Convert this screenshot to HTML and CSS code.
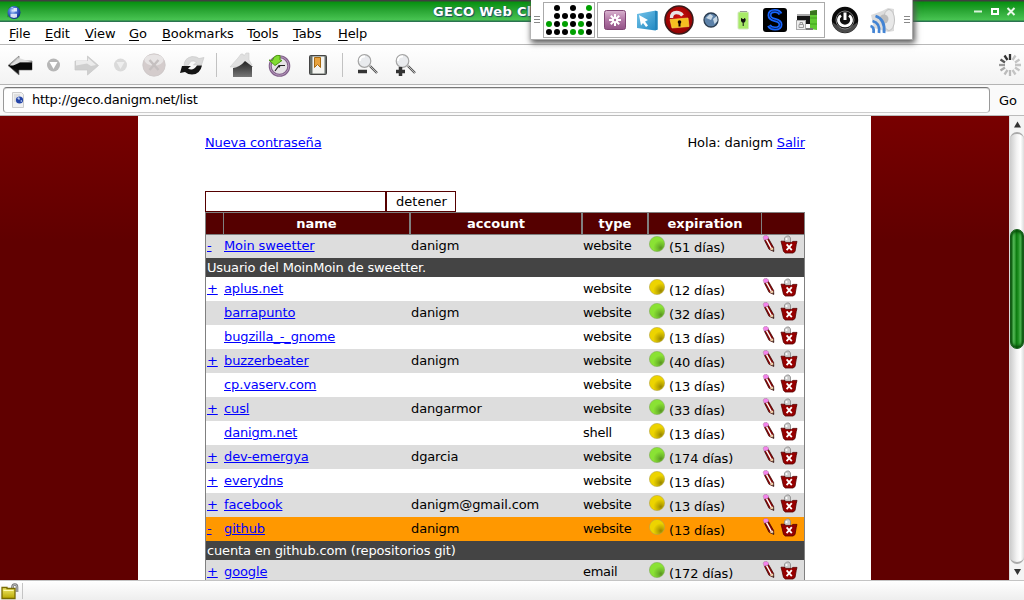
FILE: index.html
```html
<!DOCTYPE html>
<html lang="es">
<head>
<meta charset="utf-8">
<title>GECO Web Client</title>
<link rel="stylesheet" href="styles.css">
</head>
<body>
<svg class="defs" width="0" height="0">
  <defs>
    <radialGradient id="gGreen" cx=".75" cy=".75" r=".5"><stop offset="0" stop-color="#5a9320"/><stop offset=".35" stop-color="#6cb62a"/><stop offset="1" stop-color="#8ae234"/></radialGradient>
    <radialGradient id="gYellow" cx=".75" cy=".75" r=".5"><stop offset="0" stop-color="#988600"/><stop offset=".35" stop-color="#baa600"/><stop offset="1" stop-color="#edd400"/></radialGradient>
    <linearGradient id="gBlack" x2="0" y2="1"><stop offset="0" stop-color="#ddd"/><stop offset=".42" stop-color="#999"/><stop offset=".5" stop-color="#000"/><stop offset="1" stop-color="#222"/></linearGradient>
    <linearGradient id="gHouse" x2="0" y2="1"><stop offset="0" stop-color="#222"/><stop offset="1" stop-color="#777"/></linearGradient>
    <linearGradient id="gSky" x2="1" y2="1"><stop offset="0" stop-color="#75c4ea"/><stop offset="1" stop-color="#1d86c0"/></linearGradient>
    <radialGradient id="gGlobe" cx=".4" cy=".35" r=".65"><stop offset="0" stop-color="#dce8ff"/><stop offset=".4" stop-color="#4a78d8"/><stop offset="1" stop-color="#102a90"/></radialGradient>
    <radialGradient id="gRed" cx=".5" cy=".4" r=".6"><stop offset="0" stop-color="#d01010"/><stop offset="1" stop-color="#8c0000"/></radialGradient>
    <linearGradient id="gLock" x2="0" y2="1"><stop offset="0" stop-color="#f4ec70"/><stop offset="1" stop-color="#b8a800"/></linearGradient>
    <linearGradient id="gPurple" x2="0" y2="1"><stop offset="0" stop-color="#d9b3cf"/><stop offset=".5" stop-color="#b277a6"/><stop offset="1" stop-color="#925286"/></linearGradient>
  </defs>
  <symbol id="green" viewBox="0 0 16 16"><circle cx="8" cy="8" r="7.6" fill="url(#gGreen)" stroke="#7fae55" stroke-width=".6"/></symbol>
  <symbol id="yellow" viewBox="0 0 16 16"><circle cx="8" cy="8" r="7.6" fill="url(#gYellow)" stroke="#b7a647" stroke-width=".6"/></symbol>
  <symbol id="pencil" viewBox="0 0 14 18">
    <path d="M2.200 4.800 6.200 3l5.400 9.400.2 4L7 14.300z" fill="#870000" stroke="#300" stroke-width=".7"/>
    <path d="m4.400 4.300 5 9.200" stroke="#fff" stroke-width="1.500"/>
    <path d="m7.300 14 3.700-1.600.6 3.600z" fill="#f3d9b0"/><path d="m10 15 1.600-.6.2 2z" fill="#111"/>
    <path d="m1.200 2.200 1-1.500 2.800-.2 1.500 1.500-.1 1.700-4.100 1.600z" fill="#f583ee" stroke="#a77299" stroke-width=".5"/>
  </symbol>
  <symbol id="trash" viewBox="0 0 18 19">
    <path d="M4.500 8V3l2-2H9l1.500 2v5" fill="#ccc" stroke="#888" stroke-width=".8"/><circle cx="6.500" cy="4" r="1.100" fill="#fff"/>
    <path d="M1 6.200h3l2 1.200h5.500l1.500-1h4l-.8 3.200-1.200 7L13 18H5.300l-1.800-1.600L2 10z" fill="#960000" stroke="#500" stroke-width=".8"/>
    <path d="m6.600 9.300 5.200 5.800m0-6-5.200 6" stroke="#fff" stroke-width="1.800"/>
  </symbol>
</svg>

<header class="titlebar">
  <svg class="app" width="16" height="18" viewBox="0 0 16 18"><path d="M3 4 14 3v10l-3 3-10-2z" fill="#167a20" opacity=".5"/><circle cx="8" cy="9.500" r="6.500" fill="url(#gGlobe)"/><path d="M4.500 5q2-1.500 3 0v3.500h3.500V5M4.500 14v-3.200H11v3.500l-3 .8z" fill="#f4f8ff" opacity=".85"/></svg>
  <span class="title">GECO Web Client</span>
  <svg class="winbtns" width="44" height="12" viewBox="0 0 44 12"><path d="M1 5.500h8" stroke="#d9f2da" stroke-width="2"/><path d="M19 3h6v5h-6z" fill="none" stroke="#fff" stroke-width="2"/><path d="m34.500 2 7 7m0-7-7 7" stroke="#e8f7e8" stroke-width="2"/></svg>
</header>

<nav class="menu">
  <span><u>F</u>ile</span><span><u>E</u>dit</span><span><u>V</u>iew</span><span><u>G</u>o</span><span><u>B</u>ookmarks</span><span>T<u>o</u>ols</span><span><u>T</u>abs</span><span><u>H</u>elp</span>
</nav>

<div class="toolbar">
  <svg width="420" height="39" viewBox="0 45 420 39">
    <path d="m8 65.500 11-9.500v5h13v9H19v5z" fill="url(#gBlack)" stroke="#777" stroke-width=".7"/><path d="m19 58-9.500 7.500h4L20 62h11" fill="#ddd"/><path d="m13 66 7-3.500h12v7H18z" fill="#080808"/>
    <circle cx="53.500" cy="65" r="6.500" fill="#b6b6b6"/><path d="M49.500 62h8l-4 7z" fill="#fff"/>
    <path d="m98.500 65.500-11-9.500v5H75v9h12.500v5z" fill="#cfcfcf" stroke="#c6c6c6" stroke-width=".7"/><path d="m88 58 8 7-5 1-4-2.500-11 2V61h12z" fill="#ececec"/>
    <circle cx="120.500" cy="65" r="6.500" fill="#dadada"/><path d="M116.500 62h8l-4 7z" fill="#eee"/>
    <circle cx="154" cy="65" r="11.200" fill="#d4cccc" stroke="#cbc6c6" stroke-width=".8"/><ellipse cx="154" cy="60" rx="9.500" ry="5.500" fill="#e7e4e4"/><path d="m149.500 60 9 10m0-10-9 10" stroke="#c5c0c0" stroke-width="2.500"/>
    <path d="M184 66q0-8 8-9.500 5 0 7 2l5-1-2.500 7.500h-8l3-3q-6-3-8 3z" fill="#dadada" stroke="#c4c4c4" stroke-width=".6"/><path d="m180 73 2-7h9l-3 2.500q5 3 9-3h5q-2 9-10 9-4 0-7-2.500z" fill="#151515"/>
    <path d="M216.500 53v24M342.500 53v24" stroke="#c2c2c2"/>
    <path d="m230 67 8-9 3-4h2l1 2 2-3h3v7l3 5-8 1z" fill="#e0e0e0" stroke="#ccc" stroke-width=".6"/><path d="M233 68q7-1 12-7l8 6h-1v10h-19z" fill="url(#gHouse)"/>
    <circle cx="279.500" cy="66" r="9.300" fill="#e6e3e6" stroke="#82618b" stroke-width="3"/><circle cx="279.500" cy="66" r="9.300" fill="none" stroke="#b79abd"/><path d="m275 71 4-5.500h6m-5 0-1 2" fill="none" stroke="#222" stroke-width="1.200"/><path d="m269 60 3.500.500q1.500-6 7.500-5v4.500l2 .5-7 5z" fill="#82dc32" stroke="#4c9a10"/>
    <rect x="309.500" y="55.500" width="17" height="19" rx="1" fill="#68706c" stroke="#444"/><path d="M312.500 56.500h12v17h-12z" fill="#f4f4f0"/><path d="M314.500 57.500h6v10l-3-3-3 3z" fill="#e8a33e" stroke="#a96a10"/>
    <g id="zoomlens"><path d="m370 66 7 7" stroke="#555" stroke-width="2.400"/><path d="m370 66 7 7" stroke="#bbb"/><circle cx="364.500" cy="61" r="6.300" fill="#e9ebee" stroke="#a5a5a5" stroke-width="1.200"/><path d="M360 61q0-5 5-4.500" stroke="#fff" stroke-width="2" fill="none"/></g>
    <path d="M358 71.500h9" stroke="#333" stroke-width="3.500"/>
    <use href="#zoomlens" x="38"/><path d="M396 71.500h9m-4.500-4.500v9" stroke="#333" stroke-width="3.500"/>
  </svg>
  <svg width="24" height="24" viewBox="-12 -12 24 24" stroke-width="2.300"><path d="M0-5v-6" stroke="#333"/><path d="m-2.500-5-3-4.500" stroke="#333"/><path d="m-5-2.500-4.500-3" stroke="#555"/><path d="M-5 0h-6" stroke="#999"/><path d="m-5 2.500-4.500 3" stroke="#aaa"/><path d="m-2.500 5-3 4.500M0 5v6" stroke="#bbb"/><path d="m2.500 5 3 4.500m-.5-7 4.500 3M5 0h6M5-2.500l4.500-3M2.500-5l3-4.500" stroke="#c4c4c4"/></svg>
</div>

<div class="location">
  <div class="field"><svg width="14" height="16" viewBox="0 0 14 16"><path d="M1.500.5h9l2 2v13h-11z" fill="#f1f1f1" stroke="#ccc"/><path d="M3 3h6M3 5h3M3 7h2M3 9h2" stroke="#ccc"/><circle cx="8.500" cy="8" r="3.600" fill="#2444a8"/><path d="m6 6 2-1 1 2-1 1zM9 9l2-1v2z" fill="#b9ccf2"/></svg><span>http://geco.danigm.net/list</span></div>
  <span class="go">Go</span>
</div>

<div class="viewport">
  <main class="page">
    <div class="links"><a href="#">Nueva contraseña</a><span>Hola: danigm <a href="#">Salir</a></span></div>
    <form class="filter"><input type="text" aria-label="filtro"><button type="button">detener</button></form>
    <div class="accounts">
      <div class="row head"><b></b><b>name</b><b>account</b><b>type</b><b>expiration</b><b></b></div>
      <div class="row odd"><a href="#">-</a><a href="#">Moin sweetter</a><span>danigm</span><span class="type">website</span><span class="exp"><svg><use href="#green"/></svg>(51 días)</span><span class="act"><svg><use href="#pencil"/></svg><svg><use href="#trash"/></svg></span></div>
      <div class="note">Usuario del MoinMoin de sweetter.</div>
      <div class="row"><a href="#">+</a><a href="#">aplus.net</a><span></span><span class="type">website</span><span class="exp"><svg><use href="#yellow"/></svg>(12 días)</span><span class="act"><svg><use href="#pencil"/></svg><svg><use href="#trash"/></svg></span></div>
      <div class="row odd"><i></i><a href="#">barrapunto</a><span>danigm</span><span class="type">website</span><span class="exp"><svg><use href="#green"/></svg>(32 días)</span><span class="act"><svg><use href="#pencil"/></svg><svg><use href="#trash"/></svg></span></div>
      <div class="row"><i></i><a href="#">bugzilla_-_gnome</a><span></span><span class="type">website</span><span class="exp"><svg><use href="#yellow"/></svg>(13 días)</span><span class="act"><svg><use href="#pencil"/></svg><svg><use href="#trash"/></svg></span></div>
      <div class="row odd"><a href="#">+</a><a href="#">buzzerbeater</a><span>danigm</span><span class="type">website</span><span class="exp"><svg><use href="#green"/></svg>(40 días)</span><span class="act"><svg><use href="#pencil"/></svg><svg><use href="#trash"/></svg></span></div>
      <div class="row"><i></i><a href="#">cp.vaserv.com</a><span></span><span class="type">website</span><span class="exp"><svg><use href="#yellow"/></svg>(13 días)</span><span class="act"><svg><use href="#pencil"/></svg><svg><use href="#trash"/></svg></span></div>
      <div class="row odd"><a href="#">+</a><a href="#">cusl</a><span>dangarmor</span><span class="type">website</span><span class="exp"><svg><use href="#green"/></svg>(33 días)</span><span class="act"><svg><use href="#pencil"/></svg><svg><use href="#trash"/></svg></span></div>
      <div class="row"><i></i><a href="#">danigm.net</a><span></span><span class="type">shell</span><span class="exp"><svg><use href="#yellow"/></svg>(13 días)</span><span class="act"><svg><use href="#pencil"/></svg><svg><use href="#trash"/></svg></span></div>
      <div class="row odd"><a href="#">+</a><a href="#">dev-emergya</a><span>dgarcia</span><span class="type">website</span><span class="exp"><svg><use href="#green"/></svg>(174 días)</span><span class="act"><svg><use href="#pencil"/></svg><svg><use href="#trash"/></svg></span></div>
      <div class="row"><a href="#">+</a><a href="#">everydns</a><span></span><span class="type">website</span><span class="exp"><svg><use href="#yellow"/></svg>(13 días)</span><span class="act"><svg><use href="#pencil"/></svg><svg><use href="#trash"/></svg></span></div>
      <div class="row odd"><a href="#">+</a><a href="#">facebook</a><span>danigm@gmail.com</span><span class="type">website</span><span class="exp"><svg><use href="#yellow"/></svg>(13 días)</span><span class="act"><svg><use href="#pencil"/></svg><svg><use href="#trash"/></svg></span></div>
      <div class="row hover"><a href="#">-</a><a href="#">github</a><span>danigm</span><span class="type">website</span><span class="exp"><svg><use href="#yellow"/></svg>(13 días)</span><span class="act"><svg><use href="#pencil"/></svg><svg><use href="#trash"/></svg></span></div>
      <div class="note">cuenta en github.com (repositorios git)</div>
      <div class="row odd"><a href="#">+</a><a href="#">google</a><span></span><span class="type">email</span><span class="exp"><svg><use href="#green"/></svg>(172 días)</span><span class="act"><svg><use href="#pencil"/></svg><svg><use href="#trash"/></svg></span></div>
    </div>
  </main>
  <div class="scroll">
    <svg width="15" height="16"><path d="m4 11.500 3.500-6 3.500 6z" fill="#333"/></svg>
    <div class="trough"><div class="thumb"></div></div>
    <svg width="15" height="16"><path d="m4 5 3.500 6L11 5z" fill="#333"/></svg>
  </div>
</div>

<footer class="status"><svg width="18" height="17" viewBox="0 0 18 17"><path d="M11.500 6V4q0-2.500 2.300-2.500T16 4v5" fill="none" stroke="#777" stroke-width="2.600"/><path d="M11.500 6V4q0-2.500 2.300-2.500T16 4v5" fill="none" stroke="#bbb"/><path d="M1 4.500h5v1h8v10H1z" fill="url(#gLock)" stroke="#796b00" stroke-width="1.300"/><path d="M2.500 7.500h10" stroke="#fffbb0"/></svg><i></i></footer>

<aside class="tray">
  <span class="grip"></span>
  <div class="box dots">
    <svg width="50" height="34" viewBox="544 3 50 34"><g fill="#000"><circle cx="557" cy="8" r="3"/><circle cx="573" cy="8" r="3"/><circle cx="557" cy="16" r="3"/><circle cx="565" cy="16" r="3"/><circle cx="573" cy="16" r="3"/><circle cx="581" cy="16" r="3"/><circle cx="589" cy="16" r="3"/><circle cx="557" cy="24" r="3"/><circle cx="573" cy="24" r="3"/><circle cx="589" cy="24" r="3"/><circle cx="549" cy="32" r="3"/><circle cx="557" cy="32" r="3"/><circle cx="565" cy="32" r="3"/><circle cx="589" cy="32" r="3"/></g><g fill="#00a000"><circle cx="589" cy="8" r="3"/><circle cx="549" cy="24" r="3"/><circle cx="565" cy="24" r="3"/><circle cx="581" cy="24" r="3"/><circle cx="573" cy="32" r="3"/><circle cx="581" cy="32" r="3"/></g></svg>
  </div>
  <div class="box apps">
    <svg width="226" height="34" viewBox="598 3 226 34">
      <rect x="604.500" y="10.500" width="21" height="19" rx="2" fill="url(#gPurple)" stroke="#804574"/><path d="M615 14v12m-6-6h12m-10.200-4.200 8.400 8.400m0-8.400-8.400 8.400" stroke="#fff" stroke-width="2"/><circle cx="615" cy="20" r="3" fill="#fff"/><circle cx="615" cy="20" r="1.200" fill="#a86a9c"/>
      <path d="m637 14 19-3.500 1.500 1.500V29l-2 1.500L637 28z" fill="url(#gSky)"/><path d="M655 11h2.500v19H655z" fill="#2385bb"/><path d="m639 15 9 5-3 1.500 3 4-2 1.500-3-4-2 2.500z" fill="#fff"/>
      <circle cx="679" cy="20" r="14" fill="url(#gRed)" stroke="#391a1a" stroke-width="1.500"/><path d="M671.500 18q0-5.500 5-5.500 4 0 6 3" fill="none" stroke="#e8e4e4" stroke-width="3.300"/><path d="m670 19.500 18-1.500 1 8.500-17 1.500z" fill="#f5bf20" stroke="#fae050" stroke-width=".6"/><circle cx="679.500" cy="22" r="1.800" fill="#100"/><path d="M679.500 22v4.500" stroke="#100" stroke-width="2"/>
      <circle cx="711" cy="20" r="7" fill="#5d82a9" stroke="#2b3d50" stroke-width="1.300"/><path d="m706 18 4-4 3 2-2 4zM713 19l4-3 .5 5-3 3z" fill="#c9d9e6"/>
      <rect x="738" y="12" width="10.500" height="17" rx="1" fill="#a8ea68" stroke="#d4e9c0"/><path d="M740 11.500h7" stroke="#999"/><path d="M743.200 20v6m-1.500-8v2m3-2v2" stroke="#111" stroke-width="1"/><path d="M741 19h4.500v2l-1 1.500H742l-1-1.500z" fill="#111"/>
      <rect x="763" y="8" width="24" height="24" rx="3" fill="#000"/><path d="M780.500 14q-1.500-3-5.500-3-5.500 0-5.500 4.200 0 3.500 5.500 4.800 5.500 1.200 5.500 4.500 0 4-5.500 4-4.500 0-6-3" fill="none" stroke="#1866ff" stroke-width="4"/><path d="M780.500 14q-1.500-3-5.500-3-5.500 0-5.500 4.200 0 3.500 5.500 4.800 5.500 1.200 5.500 4.500 0 4-5.500 4-4.500 0-6-3" fill="none" stroke="#001440" stroke-width=".8"/>
      <path d="M797 14h14v10h-14z" fill="#161616"/><path d="M797 14h14v2h-14z" fill="#aaa"/><path d="m810 11 7-1v20l-7-1z" fill="#60c932"/><path d="m810 11 7-1v5h-7z" fill="#39751f"/><path d="M810 18h7m-7 6h7" stroke="#3fa01c"/><path d="M801 28h12v2h-12z" fill="#777"/><rect x="796.500" y="20.500" width="9" height="9" fill="#eee" stroke="#aaa"/><path d="M799 24.500h4.500v3H799zm1 0v-2h2.500v2" fill="none" stroke="#999"/>
    </svg>
  </div>
  <svg width="70" height="34" viewBox="829 3 70 34">
    <circle cx="845" cy="20" r="13.200" fill="#0a0a0a"/><path d="M832 22q3 11 13 11t13-11l-6 4q-7 5-14 0z" fill="#777" opacity=".6"/><circle cx="845" cy="20" r="9" fill="#111" stroke="#999" stroke-width=".8"/><path d="M841 15.500q-3 2-2.500 5.500 1.500 5 6.500 5t6.500-5q.5-3.500-2.500-5.500" fill="none" stroke="#fff" stroke-width="2.700"/><path d="M845 12.500V20" stroke="#fff" stroke-width="3"/>
    <path d="m871 15 11-4 6-3 6 1v22l-6 1-14-4z" fill="#dcdcdc"/><ellipse cx="889" cy="20" rx="5.500" ry="10.500" fill="#e8e8e8" stroke="#c2c2c2"/><circle cx="884" cy="19" r="4.500" fill="#bcbcbc"/><path d="M870.500 26q4 1 3 7m-1-12q8 2 6.500 12m-3.500-17q10 3 8.500 17" fill="none" stroke="#4384d4" stroke-width="2.800"/>
  </svg>
  <span class="grip"></span>
</aside>
</body>
</html>
```

FILE: styles.css
```css
* { box-sizing: border-box; }
body { margin: 0; width: 1024px; height: 600px; overflow: hidden; display: flex; flex-direction: column; background: #fff; color: #000; font: 13px/16px "DejaVu Sans", sans-serif; }
svg { display: block; flex: none; }
.defs { position: absolute; }
.titlebar { height: 22px; flex: none; display: grid; grid-template-columns: 427px 540px 44px; align-items: center; padding: 1px 0 0 6px; background: linear-gradient(#3f3f3f 0 1px, #079010 2px, #2ba735 11px, #48c452 20px, #2b7350 21px); }
.title { color: #fff; font-weight: bold; letter-spacing: .3px; text-shadow: 0 0 1px #174c60, 1px 1px 1px #174c60; }
.menu { height: 23px; flex: none; display: grid; grid-template-columns: 36px 40px 44px 33px 85px 46px 45px 60px; align-items: center; padding: 2px 0 0 9px; letter-spacing: -.1px; background: #fff; border-bottom: 1px solid #b8b8b8; }
.menu u { text-underline-offset: 2px; }
.toolbar { height: 40px; flex: none; display: flex; align-items: center; justify-content: space-between; padding-right: 2px; background: linear-gradient(#fff, #f3f3f3); border-bottom: 1px solid #b4b4b4; }
.location { height: 31px; flex: none; display: flex; align-items: center; padding: 2px 0 2px 3px; gap: 9px; background: #fafafa; border-bottom: 1px solid #bbb; }
.field { width: 987px; height: 26px; display: flex; align-items: center; gap: 7px; padding-left: 7px; background: #fff; border: 1px solid #999; border-bottom-color: #ccc; border-top-color: #777; border-radius: 4px; box-shadow: inset 0 1px #ddd; letter-spacing: -.28px; }
.go { padding-top: 1px; }
.viewport { height: 464px; flex: none; display: flex; justify-content: space-between; padding-left: 138px; overflow: hidden; background: linear-gradient(#780000, #600000 125px); }
.page { width: 733px; background: #fff; padding: 19px 66px 0 67px; }
.page a { color: #00f; }
.links { display: flex; justify-content: space-between; letter-spacing: -.12px; }
.filter { display: flex; margin: 40px 0 0; height: 21px; }
.filter input { width: 181px; border: 1px solid #500; padding: 0; background: #fff; }
.filter button { width: 70px; border: 1px solid #500; padding: 0 0 0 1px; background: #fff; font: inherit; color: #000; }
.accounts { width: 600px; border: 1px solid #808080; border-bottom: 0; letter-spacing: -.12px; }
.row { display: grid; grid-template-columns: 17px 187px 172px 66px 114px 42px; height: 24px; align-items: center; background: #fff; }
.row > a, .row > span { padding-left: 1px; height: 16px; }
.row > a { justify-self: start; }
.row > .type { letter-spacing: -.28px; }
.odd { background: #ddd; }
.hover { background: #ff9800; }
.head { height: 21px; grid-template-columns: 18px 187px 172px 66px 113px 42px; background: #500; color: #fff; align-items: stretch; text-align: center; line-height: 21px; letter-spacing: 0; }
.head b { border-right: 1px solid #808080; border-bottom: 1px solid #808080; }
.head b:nth-child(n+2):nth-child(-n+4) { border-right-width: 2px; }
.head b:last-child { border-right: 0; }
.note { height: 19px; line-height: 19px; padding-left: 1px; background: #444; color: #fff; letter-spacing: -.15px; }
.row > .exp { display: flex; height: 24px; gap: 4px; align-items: flex-start; line-height: 27px; letter-spacing: -.16px; }
.exp svg { width: 16px; height: 16px; margin-top: 2px; }
.row > .act { display: flex; height: 22px; gap: 4px; padding-left: 0; }
.act svg { width: 14px; height: 18px; }
.act svg + svg { width: 18px; height: 19px; }
.scroll { width: 15px; display: flex; flex-direction: column; background: #f4f4f4; border-left: 1px solid #ddd; }
.trough { flex: 1; padding-top: 95px; border: 1px solid #aaa; border-width: 2px 0; border-radius: 8px; background: linear-gradient(90deg, #ccc, #f4f4f4 50%, #fff 75%, #ddd); }
.thumb { height: 120px; border: 1px solid #145a18; border-radius: 7px; background: linear-gradient(90deg, #1c741f, #55bd57 20%, #3ca33e 32%, #0d7c10 45%, #1c8d1f 60%, #4fb751 80%, #1b7820); box-shadow: inset 0 2px 3px #064a08, inset 0 -2px 3px #064a08; }
.status { height: 20px; flex: none; display: flex; align-items: center; gap: 3px; padding: 1px 0 0 1px; border-top: 1px solid #c4c4c4; background: linear-gradient(#fff, #eee); }
.status i { width: 1px; height: 16px; background: #c4c4c4; }
/* Floating system tray over the window's title bar */
.tray { position: absolute; left: 531px; top: 0; width: 382px; height: 40px; display: flex; align-items: center; padding: 0 3px; background: #fff; border: 1px solid #aaa; border-width: 0 1px 1px 0; box-shadow: 1px 2px 6px 1px #555; }
.grip { width: 6px; height: 7px; flex: none; background: repeating-linear-gradient(#888 0 1px, #fff 1px 3px); }
.box { border: 1px solid #aaa; height: 36px; flex: none; }
.dots { margin: 0 2px 0 3px; }
.tray > svg { margin: 0 5px 0 4px; }
```
